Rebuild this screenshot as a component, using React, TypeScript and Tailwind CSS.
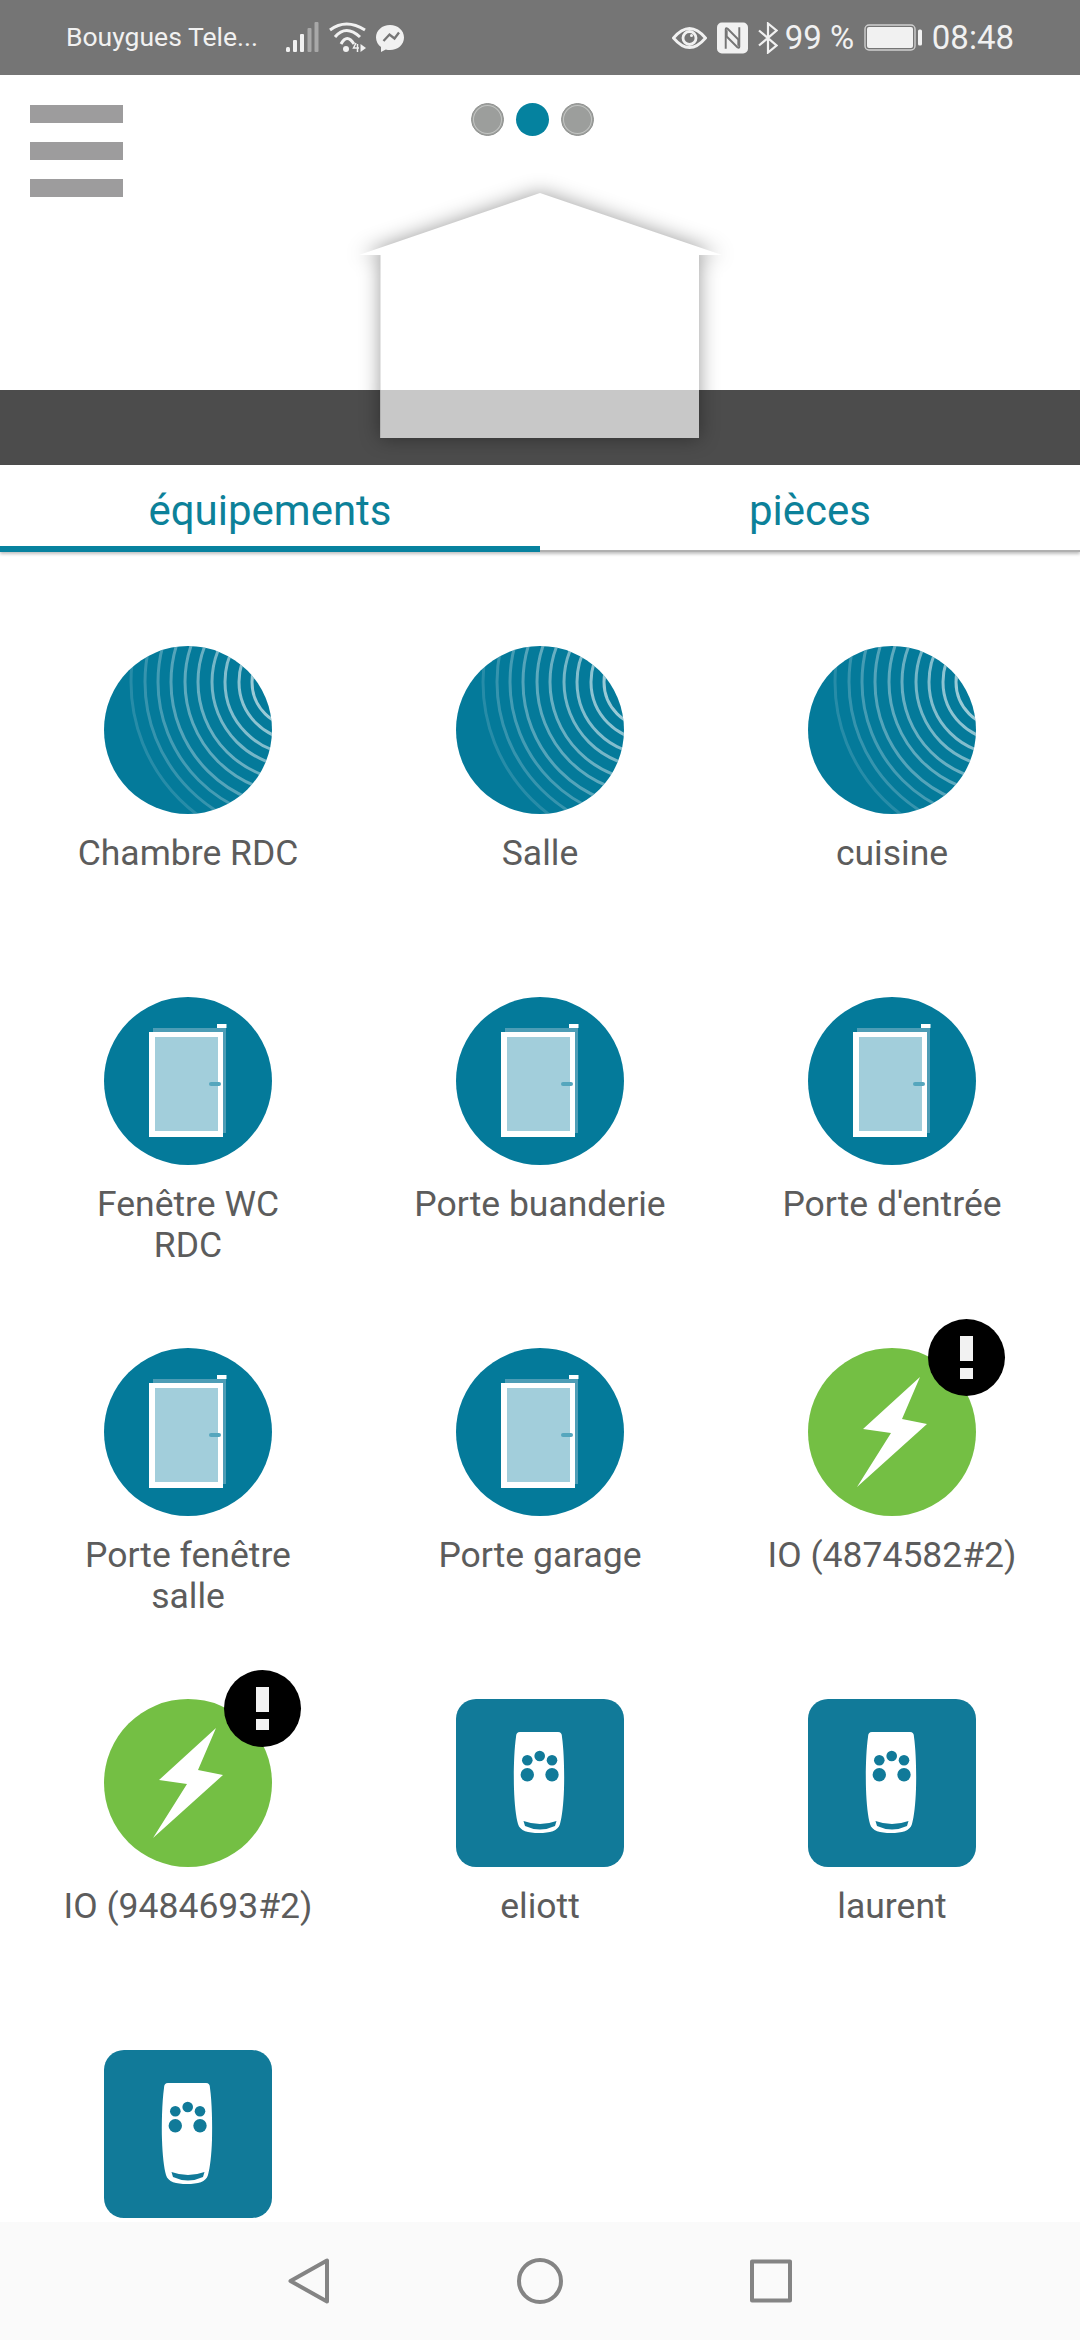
const roboto = "font-['Roboto',sans-serif]";

type Kind = "zone" | "door" | "power" | "remote";

const devices: { label: string; kind: Kind; alert?: boolean }[] = [
  { label: "Chambre RDC", kind: "zone" },
  { label: "Salle", kind: "zone" },
  { label: "cuisine", kind: "zone" },
  { label: "Fenêtre WC RDC", kind: "door" },
  { label: "Porte buanderie", kind: "door" },
  { label: "Porte d'entrée", kind: "door" },
  { label: "Porte fenêtre salle", kind: "door" },
  { label: "Porte garage", kind: "door" },
  { label: "IO (4874582#2)", kind: "power", alert: true },
  { label: "IO (9484693#2)", kind: "power", alert: true },
  { label: "eliott", kind: "remote" },
  { label: "laurent", kind: "remote" },
  { label: "", kind: "remote" },
];

const waves = [
  [45, 0.6],
  [58, 0.55],
  [72, 0.5],
  [85, 0.45],
  [99, 0.4],
  [112, 0.36],
  [126, 0.32],
  [139, 0.26],
  [152, 0.2],
  [166, 0.14],
];

function ZoneIcon({ id }: { id: string }) {
  return (
    <svg viewBox="0 0 168 168" className="w-[168px] h-[168px]">
      <clipPath id={id}>
        <circle cx="84" cy="84" r="84" />
      </clipPath>
      <circle cx="84" cy="84" r="84" fill="#047a9a" />
      <g clipPath={`url(#${id})`} fill="none" stroke="#ffffff" strokeWidth="3">
        {waves.map(([r, o]) => (
          <circle key={r} cx="193" cy="36" r={r} strokeOpacity={o} />
        ))}
      </g>
    </svg>
  );
}

function DoorIcon() {
  return (
    <svg viewBox="0 0 168 168" className="w-[168px] h-[168px]">
      <circle cx="84" cy="84" r="84" fill="#047a9a" />
      <rect x="49" y="31" width="73" height="105" fill="#4d9db6" />
      <rect x="45" y="35" width="74" height="105" fill="#ffffff" />
      <rect x="51" y="40" width="63" height="94" fill="#a2cedb" />
      <rect x="113" y="27" width="9.500" height="4" fill="#ffffff" />
      <rect x="105" y="85" width="12" height="4" rx="2" fill="#55a6bd" />
    </svg>
  );
}

function PowerIcon() {
  return (
    <svg viewBox="0 0 168 168" className="w-[168px] h-[168px]">
      <circle cx="84" cy="84" r="84" fill="#74bf44" />
      <polygon points="112,29 94,71 119,76 49,139 83,85 55,81" fill="#ffffff" />
    </svg>
  );
}

function RemoteIcon() {
  return (
    <svg viewBox="0 0 168 168" className="w-[168px] h-[168px] rounded-[20px] bg-[#117a99]">
      <path
        d="M64 33 H102 Q106 33 106 38 C108 52 108.500 75 108 90 C107.500 105 106 118 104 125 C102 132 94 134 83 134 C72 134 64 132 62 125 C60 118 58.500 105 58 90 C57.500 75 58 52 60 38 Q60 33 64 33 Z"
        fill="#ffffff"
      />
      <circle cx="83.700" cy="57" r="5.300" fill="#117a99" />
      <circle cx="71.300" cy="61.300" r="5.300" fill="#117a99" />
      <circle cx="96" cy="61.300" r="5.300" fill="#117a99" />
      <circle cx="71.300" cy="75.700" r="6.700" fill="#117a99" />
      <circle cx="96" cy="75.700" r="6.700" fill="#117a99" />
      <path d="M67.500 122 Q84 128 100.500 122 L99 127 Q84 134 69 127 Z" fill="#117a99" />
    </svg>
  );
}

function DeviceIcon({ kind, id }: { kind: Kind; id: string }) {
  if (kind === "zone") return <ZoneIcon id={id} />;
  if (kind === "door") return <DoorIcon />;
  if (kind === "power") return <PowerIcon />;
  return <RemoteIcon />;
}

function StatusBar() {
  return (
    <div className={`${roboto} h-[75px] shrink-0 bg-[#757575] text-[#f1f1f1] flex items-center pl-[66px] pr-[66px]`}>
      <span className="text-[26.500px] leading-none w-[220px] whitespace-nowrap">Bouygues Tele...</span>
      {/* signal */}
      <svg viewBox="0 0 33 30" className="w-[33px] h-[30px] mb-[1px]">
        <rect x="0" y="25" width="4" height="5" rx="1.500" fill="#f1f1f1" />
        <rect x="7" y="18" width="4" height="12" rx="1" fill="#f1f1f1" />
        <rect x="14" y="12" width="4" height="18" rx="1" fill="#f1f1f1" />
        <rect x="21.500" y="6" width="4" height="24" rx="1" fill="#a8a8a8" />
        <rect x="28.500" y="0" width="4" height="30" rx="1" fill="#a8a8a8" />
      </svg>
      {/* wifi */}
      <svg viewBox="0 0 39 30" className="w-[39px] h-[30px] ml-[9px] mb-[1px]" fill="none" stroke="#f1f1f1" strokeWidth="3">
        <path d="M2 8 Q18 -4 37 8" />
        <path d="M7 15 Q18 2 32 15" />
        <path d="M13 22 Q19 11 26 22" />
        <circle cx="18" cy="27" r="3" fill="#f1f1f1" stroke="none" />
        <path d="M28 21 L25.500 26 H31 M29.500 22 V30" strokeWidth="1.500" />
        <path d="M32.500 22 V30 L38 26 Z" fill="#f1f1f1" stroke="none" />
      </svg>
      {/* messenger */}
      <svg viewBox="0 0 28 27" className="w-[28px] h-[27px] ml-[9px] mt-[2px]">
        <path d="M14 0 C6 0 0 5.500 0 12.500 C0 16.500 2 19.800 5 22 V27 L9.800 24.500 C11.200 24.900 12.500 25 14 25 C22 25 28 19.500 28 12.500 C28 5.500 22 0 14 0 Z" fill="#f1f1f1" />
        <path d="M7.500 16 L13.500 9.500 L18.500 13.500 L23 7.500" fill="none" stroke="#757575" strokeWidth="2.300" />
      </svg>
      <div className="ml-auto flex items-center">
        {/* eye */}
        <svg viewBox="0 0 35 24" className="w-[35px] h-[24px]" fill="none" stroke="#f1f1f1">
          <path d="M1.500 12 Q17.500 -7 33.500 12 Q17.500 31 1.500 12 Z" strokeWidth="2.800" />
          <circle cx="17.500" cy="12" r="6.500" strokeWidth="2.800" />
          <circle cx="19.500" cy="9.500" r="1.500" fill="#f1f1f1" stroke="none" />
        </svg>
        {/* nfc */}
        <svg viewBox="0 0 32 32" className="w-[31px] h-[32px] ml-[10px]">
          <rect width="32" height="32" rx="5" fill="#f1f1f1" />
          <path d="M9 27 V7 Q9 5 11 6.500 L22 17.500 V24" fill="none" stroke="#757575" strokeWidth="2" />
          <path d="M23 5 V25 Q23 27 21 25.500 L10 14.500 V8" fill="none" stroke="#757575" strokeWidth="2" />
        </svg>
        {/* bluetooth */}
        <svg viewBox="0 0 20 32" className="w-[20px] h-[32px] ml-[10px]" fill="none" stroke="#f1f1f1" strokeWidth="2.200">
          <path d="M1 8.500 L18.500 23.500 L10 30.500 V1.500 L18.500 8.500 L1 23.500" />
        </svg>
        <span className="text-[33px] leading-none ml-[7px] w-[79px] whitespace-nowrap">99 %</span>
        {/* battery */}
        <svg viewBox="0 0 59 27" className="w-[59px] h-[27px]">
          <rect x="1" y="1" width="50" height="25" rx="4" fill="none" stroke="#cfcfcf" strokeWidth="1.400" />
          <rect x="3" y="3" width="46" height="21" rx="2" fill="#f1f1f1" />
          <rect x="54" y="5.500" width="4" height="16" rx="1.500" fill="#f1f1f1" />
        </svg>
        <span className="text-[33px] leading-none ml-[9px] whitespace-nowrap">08:48</span>
      </div>
    </div>
  );
}

function Header() {
  return (
    <div className="relative shrink-0">
      <div className="h-[315px] bg-white flex items-start pt-[30px] pl-[30px] gap-[348px]">
        <div className="flex flex-col gap-[19px]">
          <div className="w-[93px] h-[18px] bg-[#9d9c9d]" />
          <div className="w-[93px] h-[18px] bg-[#9d9c9d]" />
          <div className="w-[93px] h-[18px] bg-[#9d9c9d]" />
        </div>
        <div className="flex gap-[12px] -mt-[2px]">
          <div className="w-[33px] h-[33px] rounded-full bg-[#9c9e9c] border border-[#8f918f] shadow-[inset_0_0_0_1px_#9c9e9c,inset_0_0_0_2px_#c2c4c2]" />
          <div className="w-[33px] h-[33px] rounded-full bg-[#05829f]" />
          <div className="w-[33px] h-[33px] rounded-full bg-[#9c9e9c] border border-[#8f918f] shadow-[inset_0_0_0_1px_#9c9e9c,inset_0_0_0_2px_#c2c4c2]" />
        </div>
      </div>
      <div className="h-[75px] bg-[#4c4c4c]" />
      {/* house drawing over the band */}
      <svg viewBox="0 0 400 290" className="absolute left-[340px] top-[98px] w-[400px] h-[290px] drop-shadow-[0_0_10px_rgba(0,0,0,0.4)]">
        <polygon points="200,20 382,82 359,82 359,265 40.500,265 40.500,82 19,82" fill="#ffffff" />
        <rect x="40.500" y="217" width="318.500" height="48" fill="#c8c8c8" />
      </svg>
    </div>
  );
}

function Tabs() {
  return (
    <div className={`${roboto} relative z-10 shrink-0 flex h-[87px] bg-white text-[#0c8199] text-[42px] shadow-[0_2px_3px_rgba(0,0,0,0.25)]`}>
      <div className="flex-1 flex items-center justify-center pt-[10px] border-b-[6px] border-[#07829f]">équipements</div>
      <div className="flex-1 flex items-center justify-center pt-[6px] border-b-2 border-[#b0b0b0]">pièces</div>
    </div>
  );
}

function DeviceCell({ label, kind, alert, id }: { label: string; kind: Kind; alert?: boolean; id: string }) {
  return (
    <div className="h-[351px] flex flex-col items-center">
      <div className="relative w-[168px] h-[168px]">
        <DeviceIcon kind={kind} id={id} />
        {alert && (
          <div className="absolute left-[120px] -top-[29px] w-[77px] h-[77px] rounded-full bg-black flex flex-col items-center pt-[17px] gap-[7px]">
            <div className="w-[13px] h-[25px] bg-[#f2f2f2]" />
            <div className="w-[13px] h-[11px] bg-[#f2f2f2]" />
          </div>
        )}
      </div>
      <div className="mt-[19px] max-w-[254px] text-center text-[35.500px] leading-[41px] text-[#5c5c5c]">{label}</div>
    </div>
  );
}

function NavBar() {
  return (
    <div className="h-[118px] shrink-0 bg-[#fafafa] flex items-center justify-center gap-[187px]">
      <svg viewBox="0 0 42 46" className="w-[42px] h-[46px]" fill="none" stroke="#848484" strokeWidth="4" strokeLinejoin="round">
        <path d="M39 2.500 V43.500 L2.500 23 Z" />
      </svg>
      <svg viewBox="0 0 46 46" className="w-[46px] h-[46px]" fill="none" stroke="#848484" strokeWidth="4">
        <circle cx="23" cy="23" r="21" />
      </svg>
      <svg viewBox="0 0 42 44" className="w-[42px] h-[44px]" fill="none" stroke="#848484" strokeWidth="4" strokeLinejoin="round">
        <rect x="2" y="2.500" width="38" height="39" />
      </svg>
    </div>
  );
}

export default function App() {
  return (
    <div className={`${roboto} w-[1080px] h-[2340px] flex flex-col bg-white overflow-hidden`}>
      <StatusBar />
      <Header />
      <Tabs />
      <div className="flex-1 min-h-0 overflow-hidden pt-[94px] px-[12px]">
        <div className="grid grid-cols-3">
          {devices.map((d, i) => (
            <DeviceCell key={i} label={d.label} kind={d.kind} alert={d.alert} id={`wave-${i}`} />
          ))}
        </div>
      </div>
      <NavBar />
    </div>
  );
}
